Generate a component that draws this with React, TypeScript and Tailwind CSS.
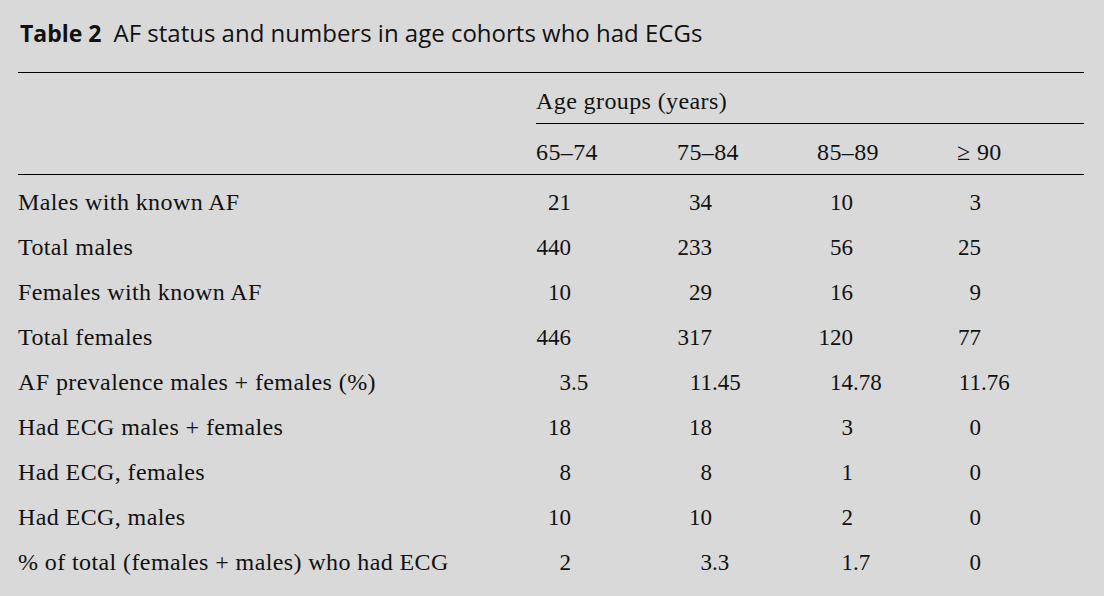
const rows: [string, string[]][] = [
  ["Males with known AF", ["21", "34", "10", "3"]],
  ["Total males", ["440", "233", "56", "25"]],
  ["Females with known AF", ["10", "29", "16", "9"]],
  ["Total females", ["446", "317", "120", "77"]],
  ["AF prevalence males + females (%)", ["3.5", "11.45", "14.78", "11.76"]],
  ["Had ECG males + females", ["18", "18", "3", "0"]],
  ["Had ECG, females", ["8", "8", "1", "0"]],
  ["Had ECG, males", ["10", "10", "2", "0"]],
  ["% of total (females + males) who had ECG", ["2", "3.3", "1.7", "0"]],
];

const cols = ["65–74", "75–84", "85–89", "≥ 90"];
// integer part is right aligned in a box of this width, so decimals line up
const intW = ["w-[35px]", "w-[35px]", "w-[36px]", "w-[24px]"];

const Num = ({ v, i }: { v: string; i: number }) => {
  const [a, b] = v.split(".");
  return (
    <div className="whitespace-nowrap text-[23px] tracking-normal">
      <span className={`inline-block text-right ${intW[i]}`}>{a}</span>
      {b !== undefined && <span>.{b}</span>}
    </div>
  );
};

export default function App() {
  return (
    <div className="w-[1104px] h-[596px] bg-[#d9d9d9] text-[#111] overflow-hidden pl-[18px] pr-[20px]">
      <div className="h-[72px] pt-[17px] pl-[2px] font-['Open_Sans',Arial,sans-serif] text-[24px] leading-[32px]">
        <span className="font-bold text-[23px]">Table 2</span>
        <span className="ml-[12px]">AF status and numbers in age cohorts who had ECGs</span>
      </div>

      <div className="border-t border-black font-['Liberation_Serif','Times_New_Roman',serif] text-[24px] tracking-[0.4px] leading-[45px]">
        <div className="grid grid-cols-[518px_1fr]">
          <div />
          <div>
            <div className="h-[51px] pt-[6px] border-b border-black">Age groups (years)</div>
          </div>
        </div>
        <div className="grid grid-cols-[518px_141px_140px_140px_127px] h-[51px] pt-[6px] border-b border-black">
          <div />
          {cols.map((c) => (
            <div key={c}>{c}</div>
          ))}
        </div>
        <div className="pt-[5px]">
          {rows.map(([label, vals]) => (
            <div key={label} className="grid grid-cols-[518px_141px_140px_140px_127px] h-[45px]">
              <div className="whitespace-nowrap">{label}</div>
              {vals.map((v, i) => (
                <Num key={i} v={v} i={i} />
              ))}
            </div>
          ))}
        </div>
      </div>
    </div>
  );
}
